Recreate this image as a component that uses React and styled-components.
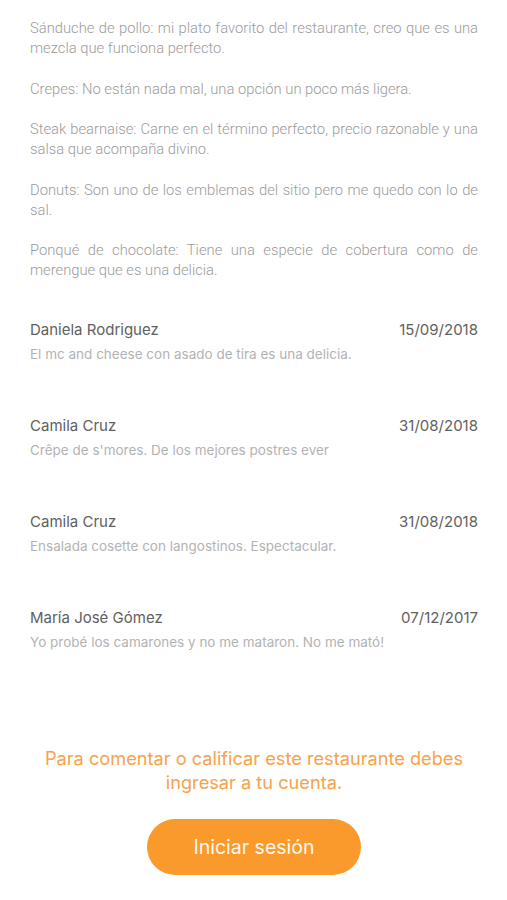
import React from 'react';
import styled, { createGlobalStyle } from 'styled-components';

const GlobalStyle = createGlobalStyle`
	body {
		margin: 0;
		background: #ffffff;
	}
`;

const Page = styled.div`
	width: 507px;
	box-sizing: border-box;
	padding: 18px 29px 0 30px;
`;

const Notes = styled.div`
	font-family: Roboto, 'Liberation Sans', sans-serif;
	font-weight: 300;
	font-size: 14.75px;
	line-height: 20px;
	color: #9b9b9b;
	text-align: justify;

	p {
		margin: 0 0 20.5px;
	}
`;

const Reviews = styled.div`
	margin-top: 40px;
	display: flex;
	flex-direction: column;
	gap: 52px;
`;

const Review = styled.div`
	display: flex;
	flex-direction: column;
	gap: 4px;
	font-family: Inter, 'Liberation Sans', sans-serif;
`;

const ReviewHead = styled.div`
	display: flex;
	justify-content: space-between;
	align-items: baseline;
	font-size: 15px;
	line-height: 20px;
	color: #606060;
`;

const Comment = styled.div`
	font-size: 13.5px;
	line-height: 20px;
	color: #b3b3b3;
`;

const Footer = styled.div`
	margin-top: 94px;
	display: flex;
	flex-direction: column;
	align-items: center;
	font-family: Inter, 'Liberation Sans', sans-serif;
`;

const Prompt = styled.div`
	font-size: 18.2px;
	line-height: 24px;
	color: #f7a24c;
	text-align: center;
`;

const LoginButton = styled.button`
	margin-top: 25px;
	width: 214px;
	height: 56px;
	border: none;
	border-radius: 28px;
	background: #fb9a2c;
	color: #fff8f0;
	font-family: Inter, 'Liberation Sans', sans-serif;
	font-size: 19.5px;
	cursor: pointer;
`;

const notes = [
	'Sánduche de pollo: mi plato favorito del restaurante, creo que es una mezcla que funciona perfecto.',
	'Crepes: No están nada mal, una opción un poco más ligera.',
	'Steak bearnaise: Carne en el término perfecto, precio razonable y una salsa que acompaña divino.',
	'Donuts: Son uno de los emblemas del sitio pero me quedo con lo de sal.',
	'Ponqué de chocolate: Tiene una especie de cobertura como de merengue que es una delicia.',
];

const reviews = [
	{ name: 'Daniela Rodriguez', date: '15/09/2018', text: 'El mc and cheese con asado de tira es una delicia.' },
	{ name: 'Camila Cruz', date: '31/08/2018', text: "Crêpe de s'mores. De los mejores postres ever" },
	{ name: 'Camila Cruz', date: '31/08/2018', text: 'Ensalada cosette con langostinos. Espectacular.' },
	{ name: 'María José Gómez', date: '07/12/2017', text: 'Yo probé los camarones y no me mataron. No me mató!' },
];

function App() {
	return (
		<>
			<GlobalStyle />
			<Page>
				<Notes>
					{notes.map((note) => (
						<p key={note}>{note}</p>
					))}
				</Notes>
				<Reviews>
					{reviews.map((review, i) => (
						<Review key={i}>
							<ReviewHead>
								<span>{review.name}</span>
								<span>{review.date}</span>
							</ReviewHead>
							<Comment>{review.text}</Comment>
						</Review>
					))}
				</Reviews>
				<Footer>
					<Prompt>
						Para comentar o calificar este restaurante debes
						<br />
						ingresar a tu cuenta.
					</Prompt>
					<LoginButton>Iniciar sesión</LoginButton>
				</Footer>
			</Page>
		</>
	);
}

export default App;
